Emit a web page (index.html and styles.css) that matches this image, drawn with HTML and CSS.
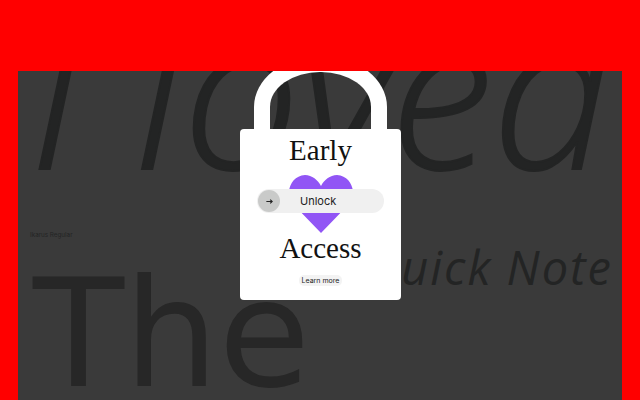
FILE: index.html
```html
<!DOCTYPE html>
<html lang="en">
<head>
<meta charset="utf-8">
<title>Early Access</title>
<link rel="stylesheet" href="styles.css">
</head>
<body>
<main class="panel">
  <h1 class="hero">I loved</h1>
  <p class="label">Ikarus Regular</p>
  <div class="row">
    <span class="the">The</span>
    <span class="note">Quick Note</span>
  </div>
  <section class="lock">
    <div class="shackle"></div>
    <div class="lock-body">
      <h2 class="word">Early</h2>
      <div class="middle">
        <svg class="heart" viewBox="0 0 64 58" aria-hidden="true"><path d="M32 58 L3 28 C-4 19 1 1 16 0 C23 0 29 5 32 11 C35 5 41 0 48 0 C63 1 68 19 61 28 Z"/></svg>
        <div class="slider">
          <span class="knob"><svg viewBox="0 0 10 10" aria-hidden="true"><path d="M1.5 5 H8 M5.8 2.8 L8 5 L5.8 7.2"/></svg></span>
          <span class="slider-text">Unlock</span>
        </div>
      </div>
      <h2 class="word word-access">Access</h2>
      <a class="more">Learn more</a>
    </div>
  </section>
</main>
</body>
</html>
```
FILE: styles.css
```css
* { box-sizing: border-box; margin: 0; padding: 0; }
html, body { height: 100%; overflow: hidden; }
body { background: #ff0000; padding: 71px 18px 0; }
.panel {
  position: relative;
  height: 329px;
  background: #3a3a3a;
  overflow: hidden;
  color: #232424;
  font-family: "Open Sans", sans-serif;
}
.hero {
  font-size: 208px;
  font-weight: 300;
  font-style: italic;
  line-height: 35px;
  height: 100px;
  padding: 0 0 0 12px;
  white-space: nowrap;
  -webkit-text-stroke: 2px #232424;
}
.label { font-size: 6.3px; line-height: 8px; margin: 60px 0 0 12px; font-family: "Inter", sans-serif; }
.row { display: flex; justify-content: space-between; align-items: baseline; margin-top: 21px; padding: 0 9px 0 15px; height: 150px; }
.the { font-size: 149px; line-height: 150px; font-family: "DejaVu Sans", sans-serif; color: #272727; }
.note { font-size: 47px; font-style: italic; line-height: 47px; letter-spacing: 2px; position: relative; top: -101px; }
.lock {
  position: absolute;
  left: 222px;
  top: -15px;
  width: 161px;
  display: flex;
  flex-direction: column;
  align-items: center;
  color: #111;
}
.shackle {
  width: 133px;
  height: 80px;
  margin-bottom: -7px;
  border: 16px solid #fff;
  border-bottom: 0;
  border-radius: 66px 66px 0 0 / 51px 51px 0 0;
}
.lock-body {
  width: 161px;
  height: 171px;
  background: #fff;
  border-radius: 4px;
  display: flex;
  flex-direction: column;
  align-items: center;
}
.word {
  font-family: "Liberation Serif", serif;
  font-weight: 400;
  font-size: 29px;
  line-height: 33px;
  margin-top: 5px;
}
.word-access { margin-top: 0; line-height: 34px; }
.middle { position: relative; width: 161px; height: 64px; display: flex; justify-content: center; }
.heart { width: 64px; height: 58px; fill: #9155f5; margin-top: 8px; flex: none; }
.slider {
  position: absolute;
  left: 17px;
  top: 22px;
  width: 127px;
  height: 24px;
  border-radius: 12px;
  background: #f0f0f0;
  display: flex;
  align-items: center;
  padding-left: 1px;
}
.knob {
  width: 22px;
  height: 22px;
  border-radius: 50%;
  background: #c9cac9;
  display: flex;
  align-items: center;
  justify-content: center;
}
.knob svg { width: 9px; height: 9px; fill: none; stroke: #222; stroke-width: 1.2; }
.slider-text {
  font-family: "Inter", sans-serif;
  font-size: 11px;
  color: #222;
  margin-left: 20px;
}
.more {
  margin-top: 10px;
  font-family: "Inter", sans-serif;
  font-size: 7px;
  line-height: 11px;
  padding: 0 3px;
  border-radius: 5px;
  background: #f3f3f3;
  color: #222;
}
```
